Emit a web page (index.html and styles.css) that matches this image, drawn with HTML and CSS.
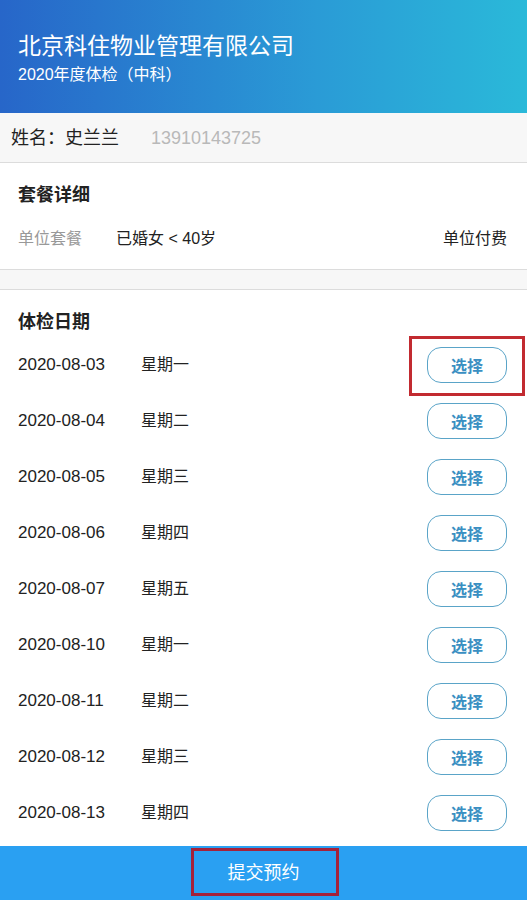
FILE: index.html
```html
<!DOCTYPE html>
<html lang="zh-CN">
<head>
<meta charset="utf-8">
<title>体检预约</title>
<link rel="stylesheet" href="styles.css">
</head>
<body>
<div class="page">
  <header class="hero">
    <div class="hero-title">北京科住物业管理有限公司</div>
    <div class="hero-sub">2020年度体检（中科）</div>
  </header>
  <div class="person">
    <span class="person-name">姓名：史兰兰</span>
    <span class="person-phone">13910143725</span>
  </div>
  <section class="pkg">
    <div class="sec-title">套餐详细</div>
    <div class="pkg-row">
      <span class="pkg-label">单位套餐</span>
      <span class="pkg-name">已婚女 &lt; 40岁</span>
      <span class="pkg-pay">单位付费</span>
    </div>
  </section>
  <div class="gap"></div>
  <section class="dates">
    <div class="sec-title dates-title">体检日期</div>
    <div class="date-row"><span class="info"><span class="d">2020-08-03</span>星期一</span><span class="btn-wrap"><button class="pick">选择</button><span class="mark mark-btn"></span></span></div>
    <div class="date-row"><span class="info"><span class="d">2020-08-04</span>星期二</span><span class="btn-wrap"><button class="pick">选择</button></span></div>
    <div class="date-row"><span class="info"><span class="d">2020-08-05</span>星期三</span><span class="btn-wrap"><button class="pick">选择</button></span></div>
    <div class="date-row"><span class="info"><span class="d">2020-08-06</span>星期四</span><span class="btn-wrap"><button class="pick">选择</button></span></div>
    <div class="date-row"><span class="info"><span class="d">2020-08-07</span>星期五</span><span class="btn-wrap"><button class="pick">选择</button></span></div>
    <div class="date-row"><span class="info"><span class="d">2020-08-10</span>星期一</span><span class="btn-wrap"><button class="pick">选择</button></span></div>
    <div class="date-row"><span class="info"><span class="d">2020-08-11</span>星期二</span><span class="btn-wrap"><button class="pick">选择</button></span></div>
    <div class="date-row"><span class="info"><span class="d">2020-08-12</span>星期三</span><span class="btn-wrap"><button class="pick">选择</button></span></div>
    <div class="date-row"><span class="info"><span class="d">2020-08-13</span>星期四</span><span class="btn-wrap"><button class="pick">选择</button></span></div>
  </section>
  <footer class="submit-bar">
    <span class="submit">提交预约<span class="mark mark-submit"></span></span>
  </footer>
</div>
</body>
</html>
```

FILE: styles.css
```css
* { box-sizing: border-box; }
html, body { margin: 0; padding: 0; }
body {
  font-family: "Liberation Sans", "Noto Sans CJK SC", sans-serif;
  color: #222;
  background: #fff;
}
.page {
  width: 527px;
  height: 900px;
  display: flex;
  flex-direction: column;
  overflow: hidden;
}
.hero {
  height: 113px;
  background: linear-gradient(90deg, #2766c9 0%, #2a9bd6 60%, #2ab9d9 100%);
  color: #fff;
  padding: 31px 18px 0;
}
.hero-title {
  font-size: 23px;
  line-height: 30px;
}
.hero-sub {
  font-size: 16px;
  line-height: 24px;
  margin-top: 2px;
}
.person {
  height: 50px;
  background: #f7f7f7;
  border-bottom: 1px solid #dcdcdc;
  display: flex;
  align-items: center;
  padding: 0 11px;
  font-size: 18px;
  line-height: 24px;
}
.person-name { color: #222; }
.person-phone {
  color: #b9b9b9;
  font-size: 18px;
  margin-left: 32px;
}
.pkg {
  height: 107px;
  padding: 20px 20px 0 18px;
  border-bottom: 1px solid #dcdcdc;
}
.sec-title {
  font-size: 18px;
  font-weight: bold;
  line-height: 24px;
  color: #222;
}
.pkg-row {
  display: flex;
  align-items: center;
  margin-top: 21px;
  font-size: 16px;
  line-height: 22px;
}
.pkg-label { color: #999; width: 98px; }
.pkg-name { color: #222; flex: 1; }
.pkg-pay { color: #222; }
.gap {
  height: 20px;
  background: #f7f7f7;
  border-bottom: 1px solid #dcdcdc;
}
.dates {
  flex: 1;
  padding: 20px 20px 0 18px;
}
.dates-title { margin-bottom: 3px; }
.date-row {
  height: 56px;
  display: flex;
  align-items: center;
}
.info {
  flex: 1;
  font-size: 16px;
  line-height: 22px;
}
.info .d {
  display: inline-block;
  width: 123px;
  font-size: 17px;
}
.btn-wrap { position: relative; display: inline-block; }
.pick {
  width: 80px;
  height: 36px;
  border: 1px solid #5aa4c8;
  border-radius: 14px;
  background: #fff;
  color: #3a8fc2;
  font-family: "Noto Sans CJK SC", sans-serif;
  font-size: 16px;
  font-weight: bold;
  padding: 0;
  display: block;
}
.mark {
  position: absolute;
  border: 3px solid #c22a30;
  pointer-events: none;
}
.mark-btn {
  left: -18px;
  top: -11px;
  width: 116px;
  height: 60px;
}
.submit-bar {
  height: 54px;
  background: #2aa0f2;
  display: flex;
  align-items: center;
  justify-content: center;
  flex-shrink: 0;
}
.submit {
  position: relative;
  color: #fff;
  font-size: 18px;
  line-height: 24px;
}
.mark-submit {
  border-color: #a5223a;
  left: -37px;
  top: -13px;
  width: 148px;
  height: 48px;
}
```
